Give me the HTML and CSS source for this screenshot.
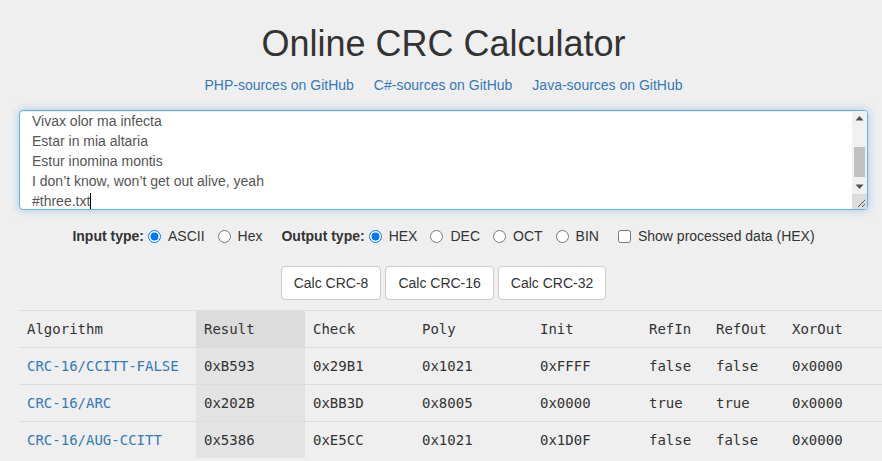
FILE: index.html
```html
<!DOCTYPE html>
<html>
<head>
<meta charset="utf-8">
<title>Online CRC Calculator</title>
<link rel="stylesheet" href="styles.css">
</head>
<body>
<div class="page">
  <h1 class="title">Online CRC Calculator</h1>
  <div class="links">
    <a href="#">PHP-sources on GitHub</a>
    <a href="#">C#-sources on GitHub</a>
    <a href="#">Java-sources on GitHub</a>
  </div>
  <div class="textbox">
    <div class="textbox-text">
      <div>Vivax olor ma infecta</div>
      <div>Estar in mia altaria</div>
      <div>Estur inomina montis</div>
      <div>I don’t know, won’t get out alive, yeah</div>
      <div>#three.txt<span class="caret"></span></div>
    </div>
    <div class="scrollbar">
      <div class="sb-btn"><svg width="15" height="15" viewBox="0 0 15 15"><polygon points="3.5,9.5 11.5,9.5 7.5,5" fill="#505050"/></svg></div>
      <div class="sb-track"><div class="sb-thumb"></div></div>
      <div class="sb-btn"><svg width="15" height="15" viewBox="0 0 15 15"><polygon points="3.5,5.5 11.5,5.5 7.5,10" fill="#505050"/></svg></div>
      <div class="sb-corner"><svg width="15" height="15" viewBox="0 0 15 15"><path d="M13 6 L6 13 M13 10 L10 13" stroke="#555" stroke-width="1"/></svg></div>
    </div>
  </div>
  <div class="options">
    <span class="group"><b>Input type:</b>
      <label><input type="radio" name="in" checked> ASCII</label>
      <label><input type="radio" name="in"> Hex</label>
    </span>
    <span class="group"><b>Output type:</b>
      <label><input type="radio" name="out" checked> HEX</label>
      <label><input type="radio" name="out"> DEC</label>
      <label><input type="radio" name="out"> OCT</label>
      <label><input type="radio" name="out"> BIN</label>
    </span>
    <label class="check"><input type="checkbox"> Show processed data (HEX)</label>
  </div>
  <div class="buttons">
    <button class="btn">Calc CRC-8</button>
    <button class="btn">Calc CRC-16</button>
    <button class="btn">Calc CRC-32</button>
  </div>
</div>
<table class="results">
  <colgroup>
    <col class="c-alg"><col class="c-res"><col class="c-chk"><col class="c-poly"><col class="c-init"><col class="c-refin"><col class="c-refout"><col class="c-xor"><col class="c-rest">
  </colgroup>
  <thead>
    <tr><th>Algorithm</th><th class="res">Result</th><th>Check</th><th>Poly</th><th>Init</th><th>RefIn</th><th>RefOut</th><th>XorOut</th><th></th></tr>
  </thead>
  <tbody>
    <tr><td><a href="#">CRC-16/CCITT-FALSE</a></td><td class="res">0xB593</td><td>0x29B1</td><td>0x1021</td><td>0xFFFF</td><td>false</td><td>false</td><td>0x0000</td><td></td></tr>
    <tr><td><a href="#">CRC-16/ARC</a></td><td class="res">0x202B</td><td>0xBB3D</td><td>0x8005</td><td>0x0000</td><td>true</td><td>true</td><td>0x0000</td><td></td></tr>
    <tr><td><a href="#">CRC-16/AUG-CCITT</a></td><td class="res">0x5386</td><td>0xE5CC</td><td>0x1021</td><td>0x1D0F</td><td>false</td><td>false</td><td>0x0000</td><td></td></tr>
  </tbody>
</table>
</body>
</html>
```
FILE: styles.css
```css
html, body {
  margin: 0;
  padding: 0;
  background: #efefef;
  overflow: hidden;
}
body {
  font-family: "Liberation Sans", Arial, sans-serif;
  font-size: 14px;
  line-height: 20px;
  color: #333;
}
a { color: #337ab7; text-decoration: none; }
.page {
  width: 849px;
  margin-left: 19px;
  text-align: center;
}
.title {
  margin: 24px 0 0;
  font-size: 36px;
  line-height: 40px;
  font-weight: 500;
  color: #333;
}
.links {
  margin-top: 11px;
  display: flex;
  justify-content: center;
  gap: 20px;
}
.textbox {
  margin-top: 15px;
  height: 98px;
  border: 1px solid #66afe9;
  border-radius: 4px;
  background: #fff;
  box-shadow: inset 0 1px 1px rgba(0,0,0,.075), 0 0 8px rgba(102,175,233,.6);
  display: flex;
  overflow: hidden;
  text-align: left;
}
.textbox-text {
  flex: 1;
  padding: 0 12px;
  color: #555;
}
.caret {
  display: inline-block;
  width: 1px;
  height: 17px;
  background: #000;
  vertical-align: -4px;
}
.scrollbar {
  width: 15px;
  background: #f1f1f1;
  display: flex;
  flex-direction: column;
}
.sb-btn { height: 15px; }
.sb-btn svg, .sb-corner svg { display: block; }
.sb-track { flex: 1; }
.sb-thumb {
  margin: 21px 2px 0 2px;
  height: 30px;
  background: #c1c1c1;
}
.sb-corner {
  height: 15px;
  background: #dcdcdc;
}
.options {
  margin-top: 16px;
  display: flex;
  justify-content: center;
  align-items: center;
  color: #333;
}
.options .group {
  display: flex;
  align-items: center;
  margin-right: 19px;
}
.options label {
  display: flex;
  align-items: center;
  margin-left: 13px;
}
.options .group b + label { margin-left: 4px; }
.options input {
  margin: 0 7px 0 0;
  width: 13px;
  height: 13px;
}
.options label.check { margin-left: 0; }
.buttons {
  margin-top: 20px;
  display: flex;
  justify-content: center;
  gap: 4px;
}
.btn {
  font-family: "Liberation Sans", Arial, sans-serif;
  font-size: 14px;
  line-height: 20px;
  padding: 6px 12px;
  height: 34px;
  background: #fff;
  color: #333;
  border: 1px solid #ccc;
  border-radius: 4px;
}
.results {
  margin: 10px 0 0 19px;
  border-collapse: collapse;
  width: 1000px;
  table-layout: fixed;
  font-family: "DejaVu Sans Mono", monospace;
  font-size: 14px;
  color: #333;
}
.results th, .results td {
  padding: 8px;
  line-height: 20px;
  text-align: left;
  font-weight: normal;
  border-top: 1px solid #ddd;
  white-space: nowrap;
}
.results thead th { border-bottom: 1px solid #ddd; }
.results th.res { background: #dcdcdc; }
.results td.res { background: #e3e3e3; }
.c-alg { width: 177px; }
.c-res { width: 109px; }
.c-chk { width: 109px; }
.c-poly { width: 118px; }
.c-init { width: 109px; }
.c-refin { width: 67px; }
.c-refout { width: 76px; }
.c-xor { width: 100px; }
```
